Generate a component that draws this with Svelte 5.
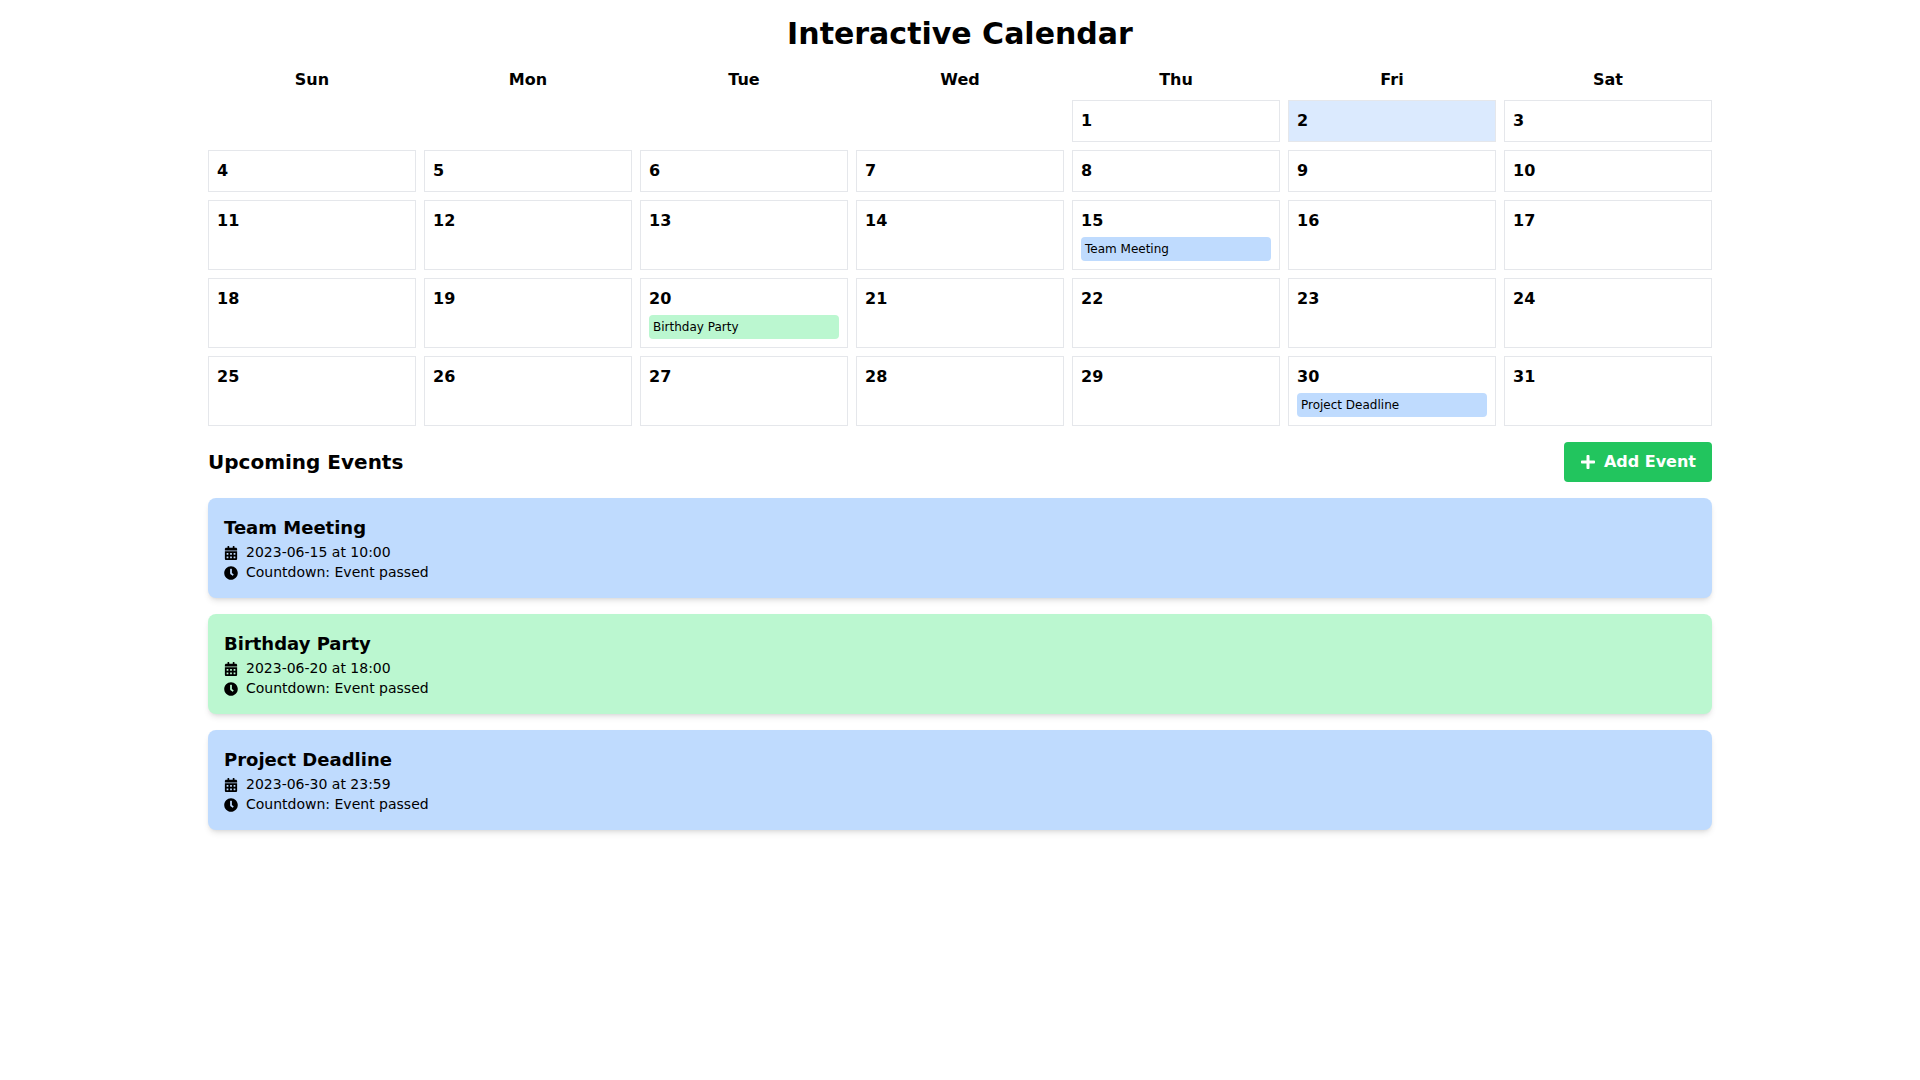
<script>
  const weekdays = ['Sun', 'Mon', 'Tue', 'Wed', 'Thu', 'Fri', 'Sat'];
  const events = [
    { title: 'Team Meeting', date: '2023-06-15', time: '10:00', color: 'blue' },
    { title: 'Birthday Party', date: '2023-06-20', time: '18:00', color: 'green' },
    { title: 'Project Deadline', date: '2023-06-30', time: '23:59', color: 'blue' }
  ];
  const today = 2;
  const days = Array.from({ length: 31 }, (_, i) => i + 1);

  function eventsOn(day) {
    return events.filter((e) => Number(e.date.slice(8)) === day);
  }
</script>

<main class="container">
  <h1>Interactive Calendar</h1>

  <div class="grid">
    {#each weekdays as name}
      <div class="weekday">{name}</div>
    {/each}
    {#each Array(4) as _}
      <div></div>
    {/each}
    {#each days as day}
      <div class="day" class:today={day === today}>
        <div class="num">{day}</div>
        {#each eventsOn(day) as ev}
          <div class="chip {ev.color}">{ev.title}</div>
        {/each}
      </div>
    {/each}
  </div>

  <div class="upcoming-head">
    <h2>Upcoming Events</h2>
    <button class="add">
      <svg class="plus" viewBox="0 0 448 512" aria-hidden="true"><path d="M416 208H272V64c0-17.67-14.33-32-32-32h-32c-17.67 0-32 14.33-32 32v144H32c-17.67 0-32 14.33-32 32v32c0 17.67 14.33 32 32 32h144v144c0 17.67 14.33 32 32 32h32c17.67 0 32-14.33 32-32V304h144c17.67 0 32-14.33 32-32v-32c0-17.67-14.33-32-32-32z" /></svg>
      Add Event
    </button>
  </div>

  <div class="list">
    {#each events as ev}
      <div class="card {ev.color}">
        <h3>{ev.title}</h3>
        <p>
          <svg class="ico" viewBox="0 0 448 512" aria-hidden="true"><path d="M0 464c0 26.5 21.5 48 48 48h352c26.5 0 48-21.5 48-48V192H0v272zm320-196c0-6.6 5.4-12 12-12h40c6.6 0 12 5.4 12 12v40c0 6.6-5.4 12-12 12h-40c-6.6 0-12-5.4-12-12v-40zm0 128c0-6.6 5.4-12 12-12h40c6.6 0 12 5.4 12 12v40c0 6.6-5.4 12-12 12h-40c-6.6 0-12-5.4-12-12v-40zM192 268c0-6.6 5.4-12 12-12h40c6.6 0 12 5.4 12 12v40c0 6.6-5.4 12-12 12h-40c-6.6 0-12-5.4-12-12v-40zm0 128c0-6.6 5.4-12 12-12h40c6.6 0 12 5.4 12 12v40c0 6.6-5.4 12-12 12h-40c-6.6 0-12-5.4-12-12v-40zM64 268c0-6.6 5.4-12 12-12h40c6.6 0 12 5.4 12 12v40c0 6.6-5.4 12-12 12H76c-6.6 0-12-5.4-12-12v-40zm0 128c0-6.6 5.4-12 12-12h40c6.6 0 12 5.4 12 12v40c0 6.6-5.4 12-12 12H76c-6.6 0-12-5.4-12-12v-40zM400 64h-48V16c0-8.8-7.2-16-16-16h-32c-8.8 0-16 7.2-16 16v48H160V16c0-8.8-7.2-16-16-16h-32c-8.8 0-16 7.2-16 16v48H48C21.5 64 0 85.5 0 112v48h448v-48c0-26.5-21.5-48-48-48z" /></svg>
          {ev.date} at {ev.time}
        </p>
        <p>
          <svg class="ico" viewBox="0 0 512 512" aria-hidden="true"><path d="M256,8C119,8,8,119,8,256S119,504,256,504,504,393,504,256,393,8,256,8Zm92.49,313h0l-20,25a16,16,0,0,1-22.49,2.5h0l-67-49.72a40,40,0,0,1-15-31.23V112a16,16,0,0,1,16-16h32a16,16,0,0,1,16,16V256l58,42.5A16,16,0,0,1,348.49,321Z" /></svg>
          Countdown: Event passed
        </p>
      </div>
    {/each}
  </div>
</main>

<style>
  :global(body) {
    margin: 0;
    background: #fff;
    color: #000;
    font-family: "DejaVu Sans", sans-serif;
  }

  .container {
    box-sizing: border-box;
    max-width: 1536px;
    margin: 0 auto;
    padding: 16px;
  }

  h1 {
    margin: 0 0 16px;
    font-size: 30px;
    line-height: 36px;
    font-weight: 700;
    text-align: center;
  }

  .grid {
    display: grid;
    grid-template-columns: repeat(7, minmax(0, 1fr));
    gap: 8px;
  }

  .weekday {
    font-size: 16px;
    line-height: 24px;
    font-weight: 700;
    text-align: center;
  }

  .day {
    border: 1px solid #e5e7eb;
    padding: 8px;
  }

  .day.today {
    background: #dbeafe;
  }

  .num {
    font-size: 16px;
    line-height: 24px;
    font-weight: 700;
  }

  .chip {
    margin-top: 4px;
    padding: 4px;
    border-radius: 4px;
    font-size: 12px;
    line-height: 16px;
  }

  .blue {
    background: #bfdbfe;
  }

  .green {
    background: #bbf7d0;
  }

  .upcoming-head {
    display: flex;
    justify-content: space-between;
    align-items: center;
    margin: 16px 0;
  }

  h2 {
    margin: 0;
    font-size: 20px;
    line-height: 28px;
    font-weight: 700;
  }

  .add {
    display: flex;
    align-items: center;
    gap: 8px;
    height: 40px;
    padding: 8px 16px;
    border: 0;
    border-radius: 4px;
    background: #22c55e;
    color: #fff;
    font-family: inherit;
    font-size: 16px;
    line-height: 24px;
    font-weight: 700;
  }

  .plus {
    width: 16px;
    height: 16px;
    fill: currentColor;
  }

  .list {
    display: flex;
    flex-direction: column;
    gap: 16px;
  }

  .card {
    padding: 16px;
    border-radius: 8px;
    box-shadow: 0 4px 6px -1px rgba(0, 0, 0, 0.1), 0 2px 4px -2px rgba(0, 0, 0, 0.1);
  }

  h3 {
    margin: 0;
    font-size: 18px;
    line-height: 28px;
    font-weight: 700;
  }

  .card p {
    display: flex;
    align-items: center;
    gap: 8px;
    margin: 0;
    font-size: 14px;
    line-height: 20px;
  }

  .ico {
    width: 14px;
    height: 14px;
    fill: currentColor;
    flex: none;
    position: relative;
    top: 1px;
  }
</style>
